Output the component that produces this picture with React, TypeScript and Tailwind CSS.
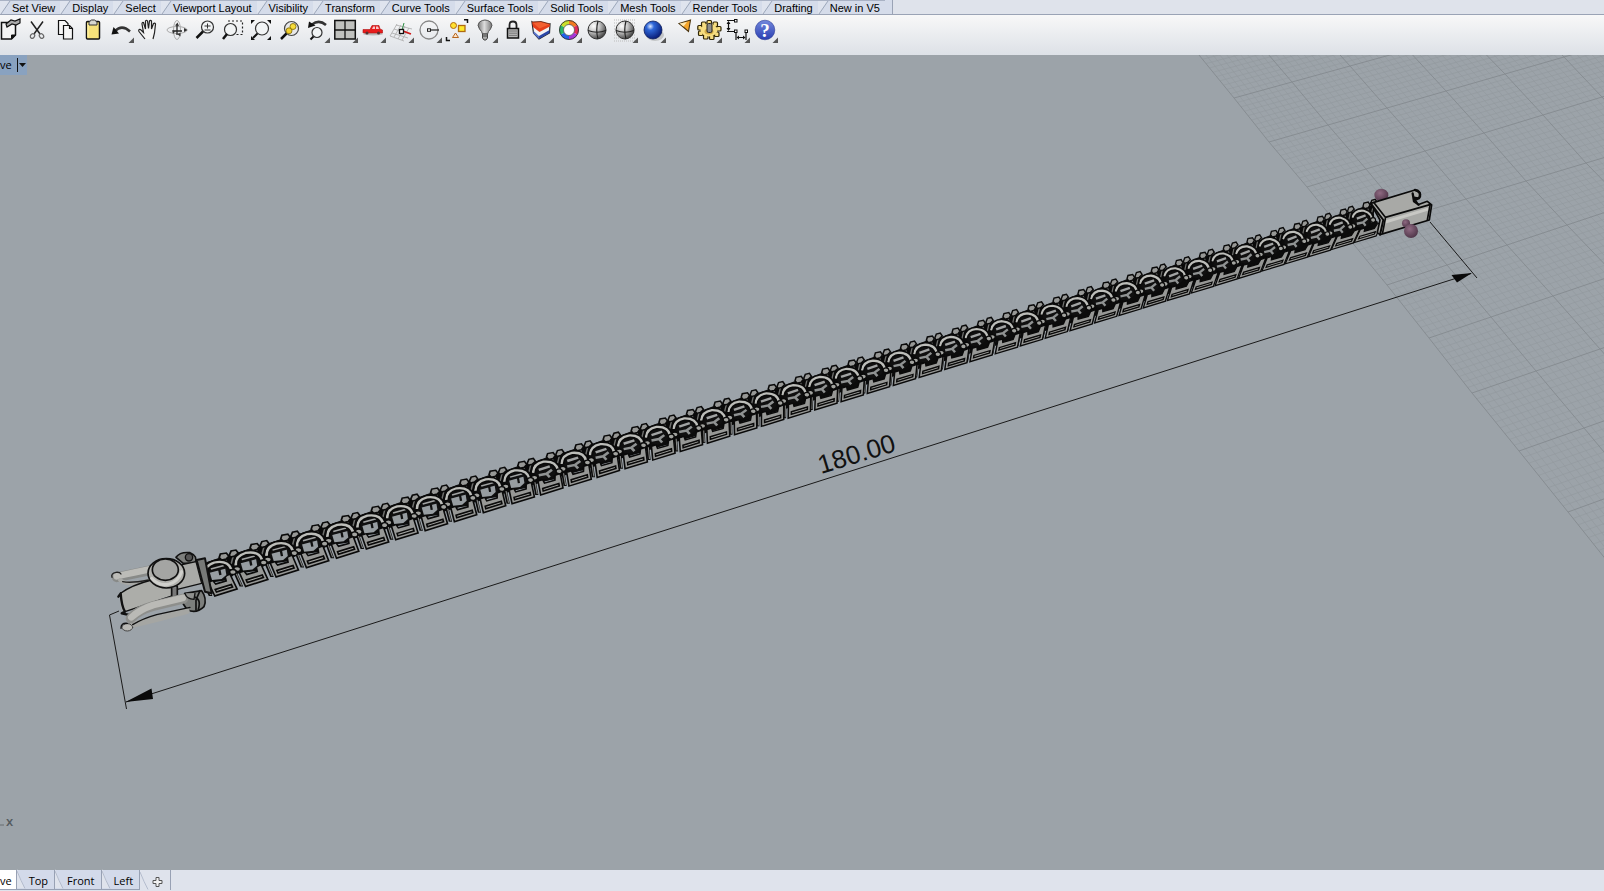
import React from "react";

interface Tool {
  name: string;
  flyout?: boolean;
  icon: React.ReactNode;
}

const MENU_TABS = [
  "Set View",
  "Display",
  "Select",
  "Viewport Layout",
  "Visibility",
  "Transform",
  "Curve Tools",
  "Surface Tools",
  "Solid Tools",
  "Mesh Tools",
  "Render Tools",
  "Drafting",
  "New in V5",
];

const VIEW_TABS = ["Top", "Front", "Left"];

const GEAR_TEETH = [
  [14, 6.5],
  [20, 8],
  [23.5, 12.5],
  [21.5, 18],
  [16.5, 21],
  [10.5, 20.5],
  [5.5, 17],
  [4.8, 11.5],
  [8.5, 8],
];

const Sphere = ({ fill }: { fill: string }) => (
  <>
    <circle cx="14" cy="14" r="9" fill={fill} stroke="#333" strokeWidth="1" />
    <path d="M5 14.500 Q14 18 23 14.500 M15 5 Q12.500 14 15 23" fill="none" stroke="#222" strokeWidth="1.200" />
  </>
);

const TOOLS: Tool[] = [
  {
    name: "Document properties",
    icon: (
      <>
        <path d="M6.500 6.500 H20.500 V19 L16.500 23 H6.500 Z" fill="#f4f4f4" stroke="#111" strokeWidth="1.500" />
        <path d="M20.500 19 H16.500 V23 Z" fill="#111" stroke="#111" />
        <path d="M11 8 L16 4 L20 5 L25 3 V7 L21 9 L17 8 L12 11 Z" fill="#aaa" stroke="#111" strokeWidth="1.200" />
      </>
    ),
  },
  {
    name: "Cut",
    icon: (
      <>
        <path d="M8 5.500 L17 18 M20 5.500 L11 18" stroke="#222" strokeWidth="1.500" />
        <ellipse cx="9.500" cy="20" rx="2" ry="2.500" fill="none" stroke="#666" strokeWidth="1.200" transform="rotate(35 9.5 20)" />
        <ellipse cx="18.500" cy="20" rx="2" ry="2.500" fill="none" stroke="#666" strokeWidth="1.200" transform="rotate(-35 18.5 20)" />
      </>
    ),
  },
  {
    name: "Copy",
    icon: (
      <g fill="#f6f6f6" stroke="#111" strokeWidth="1.200">
        <path d="M7.500 4.500 H14 L17 7.500 V18.500 H7.500 Z" />
        <path d="M12.500 9.500 H18.500 L21.500 12.500 V23 H12.500 Z" />
        <path d="M18.500 9.500 V12.500 H21.500" fill="none" />
      </g>
    ),
  },
  {
    name: "Paste",
    icon: (
      <>
        <rect x="7.500" y="5.500" width="13" height="17.500" rx="1" fill="#f7e27a" stroke="#111" strokeWidth="1.500" />
        <path d="M9 7 V21.500" stroke="#fff0a0" strokeWidth="1.500" />
        <path d="M10 9 V6 L12.500 4 H15.500 L18 6 V9 Z" fill="#d8d8d0" stroke="#333" />
      </>
    ),
  },
  {
    name: "Undo",
    flyout: true,
    icon: (
      <>
        <path d="M8 15 Q15 8 23 15.500" fill="none" stroke="#333" strokeWidth="2.500" />
        <path d="M4.500 18.500 L6.500 11 L12 17.500 Z" fill="#111" />
      </>
    ),
  },
  {
    name: "Pan",
    icon: (
      <path
        d="M10 23 L4 15.500 Q3 13 5.500 13.500 L8.500 16.500 L7 8 Q7 6 8.500 6.500 L10.500 13 L10.500 5 Q11.500 3.500 12.500 5 L13.500 12.500 L14.500 5 Q15.500 3.800 16.500 5 L16.500 13 L18.500 7.500 Q20 6.500 20.500 8 L19.500 17 L18 23"
        fill="#f4f4f4"
        stroke="#222"
        strokeWidth="1.200"
      />
    ),
  },
  {
    name: "Rotate view",
    icon: (
      <>
        <ellipse cx="14" cy="14" rx="10" ry="3.500" fill="none" stroke="#aaa" />
        <ellipse cx="14" cy="14" rx="3.500" ry="9.500" fill="none" stroke="#aaa" />
        <path d="M14 8 V19 M10 15 H19" stroke="#222" strokeWidth="1.300" />
        <path d="M12 9.500 L14.500 6.500 L16 10 Z M21 12 L24.500 14 L21 16 Z M9 14 L12 15.500 L10 18 Z M14 18 L17.500 17 V20.500 Z" fill="#333" />
      </>
    ),
  },
  {
    name: "Zoom dynamic",
    icon: (
      <>
        <circle cx="16.500" cy="11" r="6" fill="#f2f4f5" stroke="#333" strokeWidth="1.200" />
        <path d="M13.500 10 H19.500 M16.500 7.500 V12.500 M13.500 14 H19.500" stroke="#333" />
        <path d="M12 15.500 L5.500 22" stroke="#111" strokeWidth="2.500" />
      </>
    ),
  },
  {
    name: "Zoom window",
    icon: (
      <>
        <path d="M9 5 H23.500 V18.500 H17" fill="none" stroke="#222" strokeWidth="1.200" strokeDasharray="2 2" />
        <circle cx="11.500" cy="13.500" r="6" fill="#f2f4f5" stroke="#333" strokeWidth="1.200" />
        <path d="M8 18 L4 23" stroke="#111" strokeWidth="2.500" />
      </>
    ),
  },
  {
    name: "Zoom extents",
    icon: (
      <>
        <circle cx="15" cy="12.500" r="6.500" fill="#f2f4f5" stroke="#333" strokeWidth="1.200" />
        <path d="M10.500 17.500 L6 22" stroke="#111" strokeWidth="2" />
        <path d="M4 4 H8 L4 8 Z M20 4 H24 V8 Z M4 20 V24 H8 Z M24 20 V24 H20 Z" fill="#111" />
      </>
    ),
  },
  {
    name: "Zoom selected",
    icon: (
      <>
        <circle cx="16.500" cy="12.500" r="7" fill="#e8e8e8" stroke="#444" strokeWidth="1.200" />
        <path d="M11.500 17.500 L6 23" stroke="#111" strokeWidth="2.500" />
        <circle cx="14" cy="14.800" r="3" fill="#f3d02c" stroke="#7a6500" strokeWidth=".8" />
        <circle cx="18" cy="10.500" r="3" fill="#f7dc3a" stroke="#7a6500" strokeWidth=".8" />
      </>
    ),
  },
  {
    name: "Undo view change",
    flyout: true,
    icon: (
      <>
        <circle cx="14" cy="16.500" r="5" fill="#f2f4f5" stroke="#333" strokeWidth="1.200" />
        <path d="M10.500 20.500 L7.500 23.500" stroke="#111" strokeWidth="2" />
        <path d="M9 8.500 Q16 3 23 9" fill="none" stroke="#333" strokeWidth="2.500" />
        <path d="M5 12 L6 5.500 L12.500 9.500 Z" fill="#111" />
      </>
    ),
  },
  {
    name: "Four viewports",
    flyout: true,
    icon: (
      <>
        <rect x="3.800" y="4.500" width="20.500" height="18.500" fill="#c0c1be" stroke="#111" strokeWidth="1.500" />
        <path d="M14 4 V23 M3.500 14 H24.500" stroke="#111" strokeWidth="1.300" />
      </>
    ),
  },
  {
    name: "Set view",
    flyout: true,
    icon: (
      <>
        <ellipse cx="14" cy="18" rx="10" ry="1.500" fill="#bbb" />
        <path d="M4 16.500 V13.500 H11 L13 9.500 H20 L21 13 L23.500 14 V17 H4.500 Z" fill="#e81c1c" stroke="#b01010" strokeWidth=".6" />
        <path d="M13 13 L14.200 10.500 H16 V13 Z M17 10.500 H19 L20 13 H17 Z" fill="#f5c9c9" />
        <circle cx="8" cy="17" r="1.500" fill="#533" />
        <circle cx="19.500" cy="17" r="1.500" fill="#533" />
      </>
    ),
  },
  {
    name: "Construction plane",
    flyout: true,
    icon: (
      <>
        <path
          d="M9 9 L25 13 M7 13 L23 18 M5 17 L21 22 M3 20 L17 25 M10 8 L3 20 M14 9 L7 21 M18 10 L11 23 M22 12 L15 24"
          stroke="#aaa"
          strokeWidth=".8"
        />
        <path d="M15 14 L17 7" stroke="#2b8b40" />
        <path d="M16 15 L24 18" stroke="#d01818" strokeWidth="1.500" />
        <rect x="12.500" y="13.500" width="4" height="4" fill="#fff" stroke="#111" strokeWidth="1.300" />
      </>
    ),
  },
  {
    name: "Object snap",
    flyout: true,
    icon: (
      <>
        <circle cx="14" cy="14" r="9" fill="none" stroke="#888" strokeWidth="1.300" />
        <path d="M14 14 H24" stroke="#222" strokeWidth="1.200" />
        <rect x="12.500" y="12.800" width="3" height="2.500" fill="#fff" stroke="#222" />
      </>
    ),
  },
  {
    name: "Select objects",
    flyout: true,
    icon: (
      <>
        <circle cx="10.500" cy="9.500" r="3" fill="#ffe030" stroke="#b06a10" />
        <rect x="15.500" y="9.500" width="6.500" height="6" fill="#ffe92a" stroke="#b06a10" strokeWidth="1.300" />
        <path d="M12.500 17 L15.500 21.500 H9.500 Z" fill="#ffe4c8" stroke="#b5651d" />
        <path d="M21 3.800 H24.500 V7 M3.500 21 V24.500 H7" fill="none" stroke="#111" strokeWidth="1.500" />
      </>
    ),
  },
  {
    name: "Hide objects",
    flyout: true,
    icon: (
      <>
        <path d="M11.500 18 Q11 15.500 8.500 13 Q5.500 9 8.500 6 Q14 2 19.500 6 Q22.500 9 19.500 13 Q17 15.500 16.500 18 Z" fill="url(#bulb)" stroke="#555" />
        <path d="M11.500 18 H16.500 V22 L15 24 H13 L11.500 22 Z" fill="#aaa" stroke="#444" />
        <path d="M11.500 20 H16.500" stroke="#444" />
      </>
    ),
  },
  {
    name: "Lock objects",
    flyout: true,
    icon: (
      <>
        <path d="M10.500 13 V9 Q10.500 5.500 14 5.500 Q17.500 5.500 17.500 9 V13" fill="none" stroke="#222" strokeWidth="1.800" />
        <rect x="8.500" y="12.500" width="11" height="9.500" fill="#b9b9b9" stroke="#111" strokeWidth="1.500" />
        <path d="M10 15 H18 M10 17.200 H18 M10 19.400 H18" stroke="#666" strokeWidth=".8" />
      </>
    ),
  },
  {
    name: "Layers",
    flyout: true,
    icon: (
      <>
        <path d="M5 6 L12.500 13 L23 8 L22.500 17 L12 23 L6.500 17 Z" fill="#f4f4f4" stroke="#222" strokeWidth="1.200" />
        <path d="M12 20 L22.500 14 V17 L12 23 Z" fill="#2b47a8" />
        <path d="M6.500 15 L12 20 V23 L6.500 17.500 Z" fill="#5873cc" />
        <path d="M5 6 L14 5.500 L23 8 L22.800 10.500 L12.500 16 L6 11 Z" fill="#e5401c" />
        <path d="M5.500 6.500 L14 6 L22.500 8.200 L12.500 12.500 Z" fill="#f26030" />
        <path d="M5 6 L14 5.500 L23 8" fill="none" stroke="#5c1a08" strokeWidth=".8" />
      </>
    ),
  },
  {
    name: "Object colour",
    flyout: true,
    icon: (
      <>
        <g fill="none" strokeWidth="4.500">
          <path d="M14 6.500 A7.500 7.500 0 0 1 20.500 10.200" stroke="#f47a20" />
          <path d="M20.500 10.200 A7.500 7.500 0 0 1 20.500 17.700" stroke="#e22a5a" />
          <path d="M20.500 17.700 A7.500 7.500 0 0 1 14 21.500" stroke="#a535d8" />
          <path d="M14 21.500 A7.500 7.500 0 0 1 7.500 17.700" stroke="#2160e8" />
          <path d="M7.500 17.700 A7.500 7.500 0 0 1 7.500 10.200" stroke="#27b66a" />
          <path d="M7.500 10.200 A7.500 7.500 0 0 1 14 6.500" stroke="#c9e02a" />
        </g>
        <circle cx="14" cy="14" r="9.500" fill="none" stroke="#333" strokeWidth=".9" />
        <circle cx="14" cy="14" r="5.500" fill="#fff" stroke="#555" strokeWidth=".8" />
      </>
    ),
  },
  { name: "Shade", icon: <Sphere fill="url(#greyBall)" /> },
  {
    name: "Render preview",
    flyout: true,
    icon: (
      <>
        <path
          d="M3 4 H25 M3 7 H25 M3 10 H25 M3 13 H25 M3 16 H25 M3 19 H25 M3 22 H25 M3 25 H25"
          stroke="#bbb"
          strokeWidth="1"
          strokeDasharray="1 1"
        />
        <Sphere fill="url(#greyBall)" />
      </>
    ),
  },
  {
    name: "Render",
    flyout: true,
    icon: (
      <>
        <ellipse cx="16" cy="19" rx="9" ry="6" fill="#c4c6c8" />
        <circle cx="14" cy="14" r="9" fill="url(#blueBall)" stroke="#0c1d5a" strokeWidth=".8" />
      </>
    ),
  },
  {
    name: "Spotlight",
    flyout: true,
    icon: (
      <>
        <path d="M12 7.500 L23.500 4 L21.500 15.500 Z" fill="#f5a52a" stroke="#4a3510" strokeWidth="1.100" />
        <path d="M12.500 7.500 L20 6 L16.500 10.500 Z" fill="#ffe9b0" />
      </>
    ),
  },
  {
    name: "Options",
    flyout: true,
    icon: (
      <>
        {GEAR_TEETH.map(([x, y]) => (
          <rect key={`${x}-${y}`} x={x - 2} y={y - 2} width="4.500" height="4.500" rx="1" fill="#f6dd80" stroke="#2f2506" strokeWidth="1.200" />
        ))}
        <ellipse cx="14" cy="14" rx="8.500" ry="6.500" fill="#f6dd80" />
        <ellipse cx="14" cy="15.500" rx="4.500" ry="3" fill="#d3ae48" />
        <rect x="12" y="7.500" width="5" height="9" rx="1.500" fill="#8d8d8a" stroke="#222" />
      </>
    ),
  },
  {
    name: "Dimension",
    flyout: true,
    icon: (
      <>
        <path d="M4 4.500 H14 M5.500 6 V14 M4 15.500 H14 M13 16 V24 M23 16 V24 M14 21.500 H22" fill="none" stroke="#111" strokeWidth="1.200" />
        <path d="M3.500 8 L5.500 5 L7.500 8 Z M3.500 12 L5.500 15 L7.500 12 Z M16 19.500 L13.500 21.500 L16 23.500 Z M20 19.500 L22.500 21.500 L20 23.500 Z" fill="#111" />
        <g fill="#fff" stroke="#111">
          <rect x="11.500" y="3.500" width="2.500" height="2.500" />
          <rect x="11.500" y="14" width="2.500" height="2.500" />
          <rect x="22" y="14" width="2.500" height="2.500" />
        </g>
      </>
    ),
  },
  {
    name: "Help",
    flyout: true,
    icon: (
      <>
        <circle cx="14" cy="14" r="9.800" fill="url(#helpBall)" stroke="#2b3a94" strokeWidth=".6" />
        <text x="14" y="20.500" textAnchor="middle" fontFamily="Liberation Serif, serif" fontSize="19" fontWeight="700" fill="#fff">
          ?
        </text>
      </>
    ),
  },
];

const ToolButton = ({ name, flyout, icon }: Tool) => (
  <button type="button" aria-label={name} className="h-7 w-7 shrink-0">
    <svg viewBox="0 0 28 28" className="block h-7 w-7">
      {icon}
      {flyout && <path d="M27 21.500 V27 H21.500 Z" fill="#555" />}
    </svg>
  </button>
);

const Gradients = () => (
  <svg className="absolute h-0 w-0" aria-hidden="true">
    <defs>
      <radialGradient id="greyBall" cx=".32" cy=".28" r=".75">
        <stop offset="0" stopColor="#fff" />
        <stop offset=".45" stopColor="#c4c4c4" />
        <stop offset="1" stopColor="#444" />
      </radialGradient>
      <radialGradient id="blueBall" cx=".35" cy=".3" r=".7">
        <stop offset="0" stopColor="#dfeaff" />
        <stop offset=".3" stopColor="#2f67d8" />
        <stop offset="1" stopColor="#0a1f7a" />
      </radialGradient>
      <linearGradient id="helpBall" x1="0" y1="0" x2="0" y2="1">
        <stop offset="0" stopColor="#7388dc" />
        <stop offset="1" stopColor="#2a3fb2" />
      </linearGradient>
      <linearGradient id="bulb">
        <stop offset="0" stopColor="#777" />
        <stop offset=".45" stopColor="#ddd" />
        <stop offset="1" stopColor="#777" />
      </linearGradient>
      <radialGradient id="gem" cx=".4" cy=".35" r=".7">
        <stop offset="0" stopColor="#8f6a82" />
        <stop offset="1" stopColor="#4c3346" />
      </radialGradient>
    </defs>
  </svg>
);

// Each grid row: start x, start y, x step and y step per major column.
const GRID_ROWS = [
  [1199, 55, 57, -15],
  [1234, 98, 58, -16],
  [1269, 142, 59, -17],
  [1307, 187, 59, -18],
  [1346, 235, 60, -18],
  [1387, 285, 60, -20],
  [1429, 338, 62, -21],
  [1472, 393, 64, -22],
  [1519, 451, 65, -23],
  [1568, 512, 66, -24],
  [1619, 576, 68, -25],
];

const gridPoint = (u: number, v: number) => {
  const i = Math.min(Math.floor(v), GRID_ROWS.length - 2);
  const f = v - i;
  const [x, y, dx, dy] = GRID_ROWS[i].map((a, k) => a + (GRID_ROWS[i + 1][k] - a) * f);
  return `${(x + dx * u).toFixed(1)} ${(y + dy * u).toFixed(1)}`;
};

const Grid = () => {
  let minor = "";
  let major = "";
  for (let n = 0; n <= 100; n++) {
    const line = `M${gridPoint(0, n / 10)} L${gridPoint(8, n / 10)} `;
    if (n % 10 === 0) major += line;
    else minor += line;
  }
  for (let n = 0; n <= 80; n++) {
    const line = `M${GRID_ROWS.map((_, v) => gridPoint(n / 10, v)).join(" L")} `;
    if (n % 10 === 0) major += line;
    else minor += line;
  }
  return (
    <g fill="none">
      <path d={minor} stroke="#92999e" strokeWidth=".6" />
      <path d={major} stroke="#878d92" strokeWidth="1" />
    </g>
  );
};

const LAST_LINK = 43;

const linkX = (t: number) => (218 + 31.87 * t) / (1 + 0.003864 * t);
const linkY = (x: number) => 572 - 0.3077 * (x - 218);

const Link = ({ t }: { t: number }) => {
  const x = linkX(t);
  const far = t / LAST_LINK;
  const width = (linkX(t + 0.5) - linkX(t - 0.5)) / 26;
  const skew = 0.4 - 0.9 * far;
  return (
    <g transform={`translate(${x.toFixed(1)} ${linkY(x).toFixed(1)}) scale(${width.toFixed(3)} ${(1 - far * 0.06).toFixed(3)})`}>
      <path d="M-14 5 L-9 -10 L3 -15 L13 -15 L14 2 L9 8 L-8 11 Z" fill="#0c0c0c" />
      <g transform={`matrix(1 0 ${skew.toFixed(2)} 1 ${(-skew * 17).toFixed(2)} 0)`} stroke="#0a0a0a">
        <path d="M-9 8 V24" strokeWidth="3" />
        <path d="M-8.500 11 V23" stroke="#868785" strokeWidth="1" />
        <path d="M-5.500 10 L-1 8.500 L0 12 L10 9 L11 4 L16 2 V17 L-5.500 24 Z" fill="#979896" strokeWidth="1.500" />
        <path d="M-2.500 17.500 L13 12.500 V15 L-2.500 20 Z" fill="#a5a6a3" strokeWidth="1.500" />
      </g>
      <path d="M6 -14 L8 -7 M13 -17 L11 -8" stroke="#0a0a0a" strokeWidth="5" />
      <path d="M6 -14 L8 -7 M13 -17 L11 -8" stroke="#6f706e" strokeWidth="1.300" />
      <g fill="#979896" stroke="#0a0a0a" strokeWidth="1.500">
        <path d="M1 -14.500 L2 -18 L7 -19 L9 -16 L7 -13 L3 -12 Z" />
        <path d="M9.500 -17 L11 -21 L15 -22 L17 -19 L14 -16 L10.500 -15 Z" />
      </g>
      <ellipse rx="10" ry="8" transform="rotate(-16)" fill="#101010" />
      {far < 0.25 ? (
        <>
          <path d="M-7 0 L6 -4 L7 3 L3 7 L-5 8 Z" fill="#979da1" />
          <path d="M-8 0 L8 -5 M1 -3 L2 3" stroke="#101010" strokeWidth="2" />
          <path d="M-6 -3 L5 -6.500" stroke="#a1a3a3" strokeWidth="1.500" />
        </>
      ) : (
        <>
          <path d="M-6 -1.500 L4 -5" stroke="#a1a3a3" strokeWidth="2.500" />
          <path d="M-6 4 L1 2.500 L6 -1.500 M1 2.500 L4 6" stroke="#8f9292" strokeWidth="2.500" fill="none" />
        </>
      )}
      <g transform={`rotate(${(far * 28).toFixed(1)})`} fill="none">
        <path d="M-11 3 Q-12 -6 -3 -9.500 Q8 -12 11 -3" stroke="#0a0a0a" strokeWidth="5.500" />
        <path d="M-11 3 Q-12 -6 -3 -9.500 Q8 -12 11 -3" stroke="#bcbdb9" strokeWidth="2.300" />
      </g>
      <ellipse cx="-10" cy="6.500" rx="3" ry="2.500" fill="#a2a39f" stroke="#0a0a0a" strokeWidth="1.300" />
      <ellipse cx="12.500" cy="0" rx="2.800" ry="2.500" fill="#a2a39f" stroke="#0a0a0a" strokeWidth="1.300" />
    </g>
  );
};

const Clasp = () => (
  <g transform="translate(90 530) scale(.3333)" strokeLinejoin="round" strokeLinecap="round">
    <path d="M320 90 L345 85 L365 190 L345 185 Z" fill="#777977" stroke="#111" strokeWidth="6" />
    <path d="M80 142 Q130 132 195 118" fill="none" stroke="#888a88" strokeWidth="29" />
    <path d="M80 139 Q130 128 195 115" fill="none" stroke="#bcbcb8" strokeWidth="20" />
    <path d="M90 150 Q115 170 185 150" fill="none" stroke="#a8a9a6" strokeWidth="12" />
    <path d="M98 155 Q125 160 175 150" fill="none" stroke="#222" strokeWidth="4" />
    <path d="M66 142 Q62 130 78 127 Q90 126 93 132" fill="none" stroke="#222" strokeWidth="4" />
    <path d="M258 82 Q270 65 300 68 Q325 78 315 100 L280 100 Z" fill="#7d7f7d" stroke="#111" strokeWidth="5" />
    <circle cx="297" cy="82" r="11" fill="#555" stroke="#111" strokeWidth="4" />
    <path d="M270 105 L318 95 L335 160 L262 178 L255 130 Z" fill="#a9aaa7" stroke="#111" strokeWidth="4" />
    <path d="M92 190 Q125 165 185 150 L250 160 L246 195 L105 245 Q88 250 92 190 Z" fill="#acada9" />
    <path d="M92 190 Q125 165 185 150 M105 245 L246 198" fill="none" stroke="#111" strokeWidth="4" />
    <path d="M85 200 L92 190 Q95 230 105 245 L95 250 L118 255" fill="none" stroke="#111" strokeWidth="7" />
    <path d="M245 175 V202 L262 198 V170" fill="#777" stroke="#111" strokeWidth="5" />
    <ellipse cx="229" cy="130" rx="55" ry="44" fill="#b1b1ad" stroke="#111" strokeWidth="5" />
    <path d="M185 145 Q205 168 235 163 Q265 155 275 125" fill="none" stroke="#d0d0cc" strokeWidth="9" />
    <ellipse cx="226" cy="119" rx="39" ry="32" fill="#a4a5a3" stroke="#111" strokeWidth="5" />
    <path d="M285 190 L335 182 Q352 205 342 230 Q320 252 292 240 L272 210 Z" fill="#7d7f7d" stroke="#111" strokeWidth="5" />
    <path d="M310 200 Q335 205 325 238 M330 182 L318 210 L318 240" fill="none" stroke="#111" strokeWidth="5" />
    <path d="M112 288 Q200 268 290 243" fill="none" stroke="#a5a6a3" strokeWidth="18" />
    <path d="M122 265 Q145 240 190 228 L280 206" fill="none" stroke="#8e8f8c" strokeWidth="30" />
    <path d="M124 262 Q150 238 190 225 L278 204" fill="none" stroke="#babab6" strokeWidth="20" />
    <path d="M128 284 Q160 265 200 254 L300 232" fill="none" stroke="#111" strokeWidth="4" />
    <path d="M285 190 Q290 207 312 208 L315 190" fill="#8f908e" stroke="#111" strokeWidth="4" />
    <ellipse cx="112" cy="292" rx="16" ry="11" fill="#b9b9b5" stroke="#444" strokeWidth="3" />
    <path d="M93 295 Q92 278 112 280" fill="none" stroke="#111" strokeWidth="4" />
  </g>
);

const EndBox = () => (
  <g transform="translate(1340 170) scale(.3333)" strokeLinejoin="round" strokeLinecap="round">
    <ellipse cx="124" cy="75" rx="21" ry="19" fill="url(#gem)" />
    <path d="M92 100 L225 60 L240 68 L238 85 L222 82 L234 104 L262 94 L275 105 L268 150 L120 194 L112 188 L120 150 Z" fill="#a8a9a6" stroke="#0a0a0a" strokeWidth="5" />
    <path d="M92 100 L130 150 L120 194" fill="none" stroke="#0a0a0a" strokeWidth="6" />
    <path d="M102 98 L136 142 L270 104" fill="none" stroke="#0a0a0a" strokeWidth="5" />
    <path d="M136 156 L262 118" fill="none" stroke="#c8c8c4" strokeWidth="9" />
    <path d="M136 146 L128 188 M270 106 L262 150" fill="none" stroke="#0a0a0a" strokeWidth="5" />
    <path d="M225 60 Q242 62 240 80 Q232 92 222 84 M218 70 L222 94 L236 104" fill="none" stroke="#0a0a0a" strokeWidth="7" />
    <circle cx="198" cy="160" r="12" fill="url(#gem)" />
    <circle cx="213" cy="183" r="21" fill="url(#gem)" />
  </g>
);

const Dimension = () => (
  <g stroke="#1a1a1a" strokeWidth="1" fill="none">
    <path d="M119 611 L109.500 615 L126.500 709" />
    <path d="M126 702 L1471 273.500" />
    <path d="M1430 222 L1477 278" />
    <path d="M125.500 702 L151.500 688.500 L153 699 Z M1472 273 L1451.500 275 L1457 282.500 Z" fill="#0a0a0a" stroke="none" />
    <text transform="translate(821 474) rotate(-17)" fontFamily="Liberation Sans, Arial, sans-serif" fontSize="26" fill="#111" stroke="none">
      180.00
    </text>
  </g>
);

const Scene = () => {
  const links = Array.from({ length: LAST_LINK + 1 }, (_, i) => LAST_LINK - i);
  return (
    <svg viewBox="0 55 1604 815" preserveAspectRatio="xMinYMin slice" className="block h-full w-full" role="img" aria-label="Bracelet model">
      <Grid />
      <path d="M204 563 L1362 209 L1378 222 L1374 232 L210 582 Z" fill="#0c0c0c" />
      {links.map((t) => (
        <Link key={t} t={t} />
      ))}
      <Clasp />
      <EndBox />
      <Dimension />
      <path d="M0 825 H4" stroke="#666c70" />
      <text x="6" y="826" fontFamily="Open Sans, sans-serif" fontSize="13" fontWeight="600" fill="#555b5f">
        x
      </text>
    </svg>
  );
};

const MenuTab = ({ label }: { label: string }) => (
  <button type="button" className="flex h-full items-end whitespace-nowrap border-t border-[#a9b2c4] bg-[#d5dcea] pr-[5px]">
    <svg viewBox="0 0 12 14" className="h-full w-3" preserveAspectRatio="none">
      <path d="M0 0 H9 L1 14 H0 Z" fill="#dfe4ee" />
      <path d="M10 0 L1 14" stroke="#9ba5b8" fill="none" />
    </svg>
    <span className="leading-3">{label}</span>
  </button>
);

const ViewTab = ({ label }: { label: string }) => (
  <button type="button" className="flex h-5 items-end border-r border-b border-[#98a1b4] bg-[#d3daea] pr-1.5">
    <svg viewBox="0 0 12 20" className="h-5 w-3">
      <path d="M0 0 L7 19 H0 Z" fill="#dfe3ec" />
      <path d="M0 2 Q4 12 8 19.500" stroke="#b4bccd" fill="none" />
    </svg>
    <span className="leading-4">{label}</span>
  </button>
);

const App = () => {
  return (
    <div className="flex h-screen flex-col overflow-hidden bg-[#9ca3a9] font-['Liberation_Sans',Arial,sans-serif] text-black">
      <Gradients />
      <nav className="flex h-[15px] shrink-0 border-b border-[#9aa3b5] bg-[#dfe3eb] text-[11px]">
        {MENU_TABS.map((label) => (
          <MenuTab key={label} label={label} />
        ))}
        <span className="w-2 border-r border-[#9aa3b5] bg-[#d5dcea]" />
      </nav>
      <div className="flex h-10 shrink-0 items-start bg-linear-to-b from-[#f8f8f8] to-[#dde1e7] pt-px">
        <div className="-ml-[5px] flex">
          {TOOLS.map((tool) => (
            <ToolButton key={tool.name} {...tool} />
          ))}
        </div>
      </div>
      <main className="relative min-h-0 flex-1">
        <Scene />
        <button
          type="button"
          className="absolute top-0 left-0 flex h-5 items-center bg-[#89a2c0] font-['Open_Sans',sans-serif] text-[11px]"
        >
          <span className="w-4 text-left">ve</span>
          <svg viewBox="0 0 11 20" className="h-5 w-[11px]">
            <path d="M1.500 3 V17" stroke="#111" />
            <path d="M3 8 H10 L6.500 12 Z" fill="#111" />
          </svg>
        </button>
      </main>
      <footer className="flex h-[21px] shrink-0 bg-[#dfe3ec] font-['Open_Sans',sans-serif] text-[11px]">
        <button type="button" className="flex h-5 items-end border-r border-b border-[#98a1b4] bg-white pr-1">
          <span className="leading-4">ve</span>
        </button>
        {VIEW_TABS.map((label) => (
          <ViewTab key={label} label={label} />
        ))}
        <button type="button" aria-label="New viewport" className="h-5 border-r border-[#98a1b4]">
          <svg viewBox="0 0 30 20" className="h-5 w-[30px]">
            <path d="M0 2 Q4 12 8 19.500" stroke="#b4bccd" fill="none" />
            <path d="M16 7.500 H19 V10.500 H22 V13.500 H19 V16.500 H16 V13.500 H13 V10.500 H16 Z" fill="#f2f2f2" stroke="#555" />
          </svg>
        </button>
      </footer>
    </div>
  );
};

export default App;
